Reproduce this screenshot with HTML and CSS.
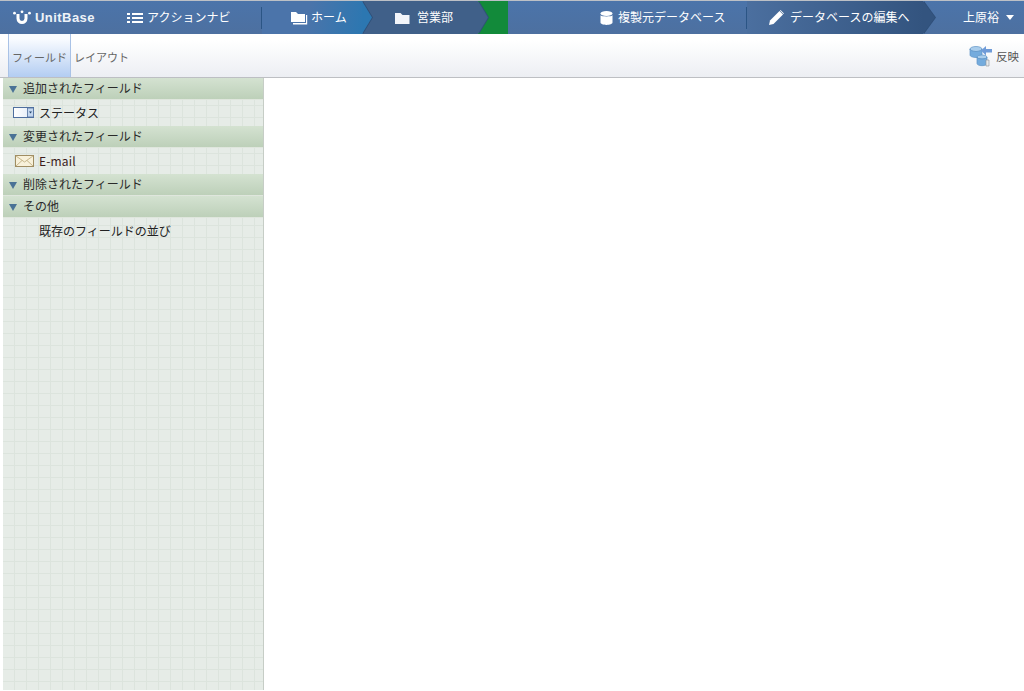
FILE: index.html
```html
<!DOCTYPE html>
<html lang="ja">
<head>
<meta charset="utf-8">
<title>UnitBase</title>
<link rel="stylesheet" href="styles.css">
</head>
<body>
<header class="topbar">
  <div class="logo">
    <svg class="logo-mark" width="18" height="15" viewBox="0 0 18 15"><path d="M3.500 4v4.500a5.500 5.500 0 0 0 11 0V4h-3v4.500a2.500 2.500 0 0 1-5 0V4z" fill="#fff"/><circle cx="1.500" cy="3.200" r="1.400" fill="#fff"/><circle cx="9" cy="1.800" r="1.400" fill="#fff"/><circle cx="16.500" cy="3.200" r="1.400" fill="#fff"/></svg>
    <span class="logo-text">UnitBase</span>
  </div>
  <div class="nav-item action">
    <svg width="16" height="12" viewBox="0 0 16 12"><path d="M0 1h3v2H0zM5 1h11v2H5zM0 5h3v2H0zM5 5h11v2H5zM0 9h3v2H0zM5 9h11v2H5z" fill="#fff"/></svg>
    <span>アクションナビ</span>
  </div>
  <div class="sep sep-left"></div>
  <div class="crumb home">
    <svg width="17" height="14" viewBox="0 0 17 14"><path d="M0 1h5l2 2h7v8H0z" fill="#fff"/><path d="M15 4h1.200v9.400H2V12h13z" fill="#fff"/></svg>
    <span>ホーム</span>
  </div>
  <div class="crumb sales">
    <svg width="15" height="12" viewBox="0 0 15 12"><path d="M0 1h5.500l2 2H14.500v9H0z" fill="#f2f5fa"/></svg>
    <span>営業部</span>
  </div>
  <div class="green"></div>
  <div class="nav-item source">
    <svg width="13" height="14" viewBox="0 0 13 14"><ellipse cx="6.500" cy="2.600" rx="6" ry="2.500" fill="#fff"/><path d="M.5 4.200c1 1.600 11 1.600 12 0v7.300c0 1.300-2.700 2.400-6 2.400s-6-1.100-6-2.400z" fill="#fff"/></svg>
    <span>複製元データベース</span>
  </div>
  <div class="sep sep-right"></div>
  <div class="crumb edit">
    <svg width="15" height="15" viewBox="0 0 15 15"><path d="M0 15l1-4.500L10.500 1l3.500 3.500L4.500 14z" fill="#fff"/><path d="M11.500 0l3.500 3.500-.6.600-3.500-3.500z" fill="#fff"/></svg>
    <span>データベースの編集へ</span>
  </div>
  <div class="user">
    <span>上原裕</span>
    <i class="caret"></i>
  </div>
</header>

<nav class="toolbar">
  <div class="tab active">フィールド</div>
  <div class="tab">レイアウト</div>
  <div class="apply">
    <svg width="24" height="22" viewBox="0 0 24 22">
      <ellipse cx="7" cy="4" rx="6" ry="2.500" fill="#a9cdec" stroke="#5f94c6" stroke-width=".7"/>
      <path d="M1 4v6c0 1.400 2.700 2.500 6 2.500s6-1.100 6-2.500V4c0 1.400-2.700 2.500-6 2.500S1 5.400 1 4z" fill="#74abdd" stroke="#5f94c6" stroke-width=".7"/>
      <path d="M12 5.500l5-4.500v3h6v3.500h-6v3z" fill="#6f9bd8"/>
      <ellipse cx="13" cy="12" rx="5" ry="2" fill="#a9cdec" stroke="#5f94c6" stroke-width=".7"/>
      <path d="M8 12v6.500c0 1.200 2.200 2.200 5 2.200s5-1 5-2.200V12c0 1.200-2.200 2-5 2s-5-.8-5-2z" fill="#74abdd" stroke="#5f94c6" stroke-width=".7"/>
      <path d="M17 15h3v6h-3z" fill="#e6e9eb" stroke="#8b9298" stroke-width=".6"/>
    </svg>
    <span>反映</span>
  </div>
</nav>

<div class="workspace">
  <aside class="sidebar">
    <div class="group"><i class="tri"></i>追加されたフィールド</div>
    <div class="row">
      <svg class="row-icon" width="22" height="11" viewBox="0 0 22 11"><defs><linearGradient id="box" x1="0" x2="1" y1="0" y2="0"><stop offset="0" stop-color="#fff"/><stop offset="1" stop-color="#dfe9f6"/></linearGradient></defs><rect x=".5" y=".5" width="20" height="10" fill="url(#box)" stroke="#4f6f9f"/><rect x="14.500" y="1" width="6" height="9" fill="#c3d6ee" stroke="#4f6f9f" stroke-width=".8"/><path d="M16 4.500h3L17.500 6.500z" fill="#24466f"/></svg>
      <span>ステータス</span>
    </div>
    <div class="group"><i class="tri"></i>変更されたフィールド</div>
    <div class="row">
      <svg class="row-icon mail" width="19" height="12" viewBox="0 0 19 12"><rect x=".5" y=".5" width="18" height="11" fill="#f8f1da" stroke="#a08d62"/><path d="M1 1l8.500 6L18 1M1 11l6-5.500M18 11l-6-5.500" fill="none" stroke="#c7b78c"/></svg>
      <span class="email">E-mail</span>
    </div>
    <div class="group"><i class="tri"></i>削除されたフィールド</div>
    <div class="group"><i class="tri"></i>その他</div>
    <div class="row"><span class="indent">既存のフィールドの並び</span></div>
  </aside>
  <main class="content"></main>
</div>
</body>
</html>
```
FILE: styles.css
```css
* { box-sizing: border-box; }
html, body { margin: 0; height: 100%; }
body {
  display: flex;
  flex-direction: column;
  height: 691px;
  overflow: hidden;
  background: #fff;
  font-family: "Noto Sans CJK JP", "Liberation Sans", sans-serif;
  font-size: 12px;
  color: #333;
}
.topbar {
  display: flex;
  align-items: center;
  height: 34px;
  flex: none;
  border-top: 1px solid #bcc0c6;
  background: linear-gradient(#4b74aa, #4d70a0);
  color: #fff;
}
.topbar svg { flex: none; }
.topbar span { padding-bottom: 2px; }
.logo {
  display: flex;
  align-items: center;
  gap: 4px;
  width: 127px;
  padding-left: 13px;
}
.topbar .logo-text {
  padding-bottom: 0;
  font-family: "Liberation Sans", sans-serif;
  font-size: 13px;
  font-weight: 700;
  letter-spacing: .45px;
  color: #eef2f8;
}
.nav-item { display: flex; align-items: center; }
.action { gap: 4px; width: 134px; }
.sep { width: 1px; height: 22px; background: #2b5585; flex: none; }
.crumb {
  position: relative;
  display: flex;
  align-items: center;
  height: 33px;
  flex: none;
}
.crumb::before, .crumb::after {
  content: "";
  position: absolute;
  top: 0;
  width: 10px;
  height: 33px;
  clip-path: polygon(0 0, 100% 50%, 0 100%);
}
.crumb::before { left: 100%; margin-left: 1px; background: #2f4f78; z-index: 1; }
.crumb::after { left: 100%; z-index: 2; }
.home {
  width: 100px;
  padding-left: 29px;
  gap: 3px;
  background: linear-gradient(100deg, #4b74aa 45%, #2c77b1 100%);
}
.home::after { background: #2c77b1; }
.sales {
  width: 116px;
  padding-left: 33px;
  gap: 7px;
  background: #406089;
}
.sales::after { background: #406089; }
.green {
  width: 30px;
  height: 33px;
  flex: none;
  background: #128a3a;
}
.source { gap: 5px; margin-left: 92px; width: 146px; }
.edit {
  width: 176px;
  padding-left: 22px;
  gap: 6px;
  background: linear-gradient(90deg, #4b6f9f 0%, #33547f 100%);
}
.edit::before, .edit::after { width: 12px; }
.edit::after { background: #33547f; }
.user {
  display: flex;
  align-items: center;
  gap: 7px;
  margin-left: 40px;
}
.caret {
  width: 0;
  height: 0;
  border: 4px solid transparent;
  border-top: 5px solid #fff;
  border-bottom: 0;
}
.toolbar {
  display: flex;
  align-items: stretch;
  height: 44px;
  flex: none;
  padding-left: 8px;
  border-bottom: 1px solid #bdbfc3;
  background: linear-gradient(#fff 15%, #eceef3 100%);
  font-size: 11px;
  color: #666;
}
.tab {
  display: flex;
  align-items: center;
  justify-content: center;
  width: 63px;
  padding-top: 2px;
}
.tab.active {
  border-left: 1px solid #a9c2e6;
  border-right: 1px solid #a9c2e6;
  background: linear-gradient(#fafcff 10%, #b3cdf2 100%);
}
.tab + .tab { margin-left: 1px; justify-content: flex-start; padding-left: 2px; }
.apply {
  display: flex;
  align-items: center;
  gap: 3px;
  margin-left: auto;
  padding-right: 5px;
  color: #555;
  font-size: 11.500px;
}
.workspace {
  display: flex;
  flex: 1;
  min-height: 0;
  padding-left: 3px;
  padding-bottom: 1px;
}
.sidebar {
  width: 261px;
  flex: none;
  border-right: 1px solid #c6cdc6;
  background-color: #e6ece7;
  background-image:
    linear-gradient(90deg, transparent 11px, #dce4dd 11px),
    linear-gradient(#dce4dd 1px, transparent 1px);
  background-size: 12px 12px;
  background-position: 0 3px;
  color: #222;
}
.group {
  display: flex;
  align-items: center;
  height: 22px;
  padding: 0 0 2px 6px;
  gap: 6px;
  border-bottom: 1px solid #dfe6dd;
  background: linear-gradient(#d4e2d1, #bdd0b9);
  color: #2a2a2a;
}
.tri {
  width: 0;
  height: 0;
  margin-top: 4px;
  border-left: 4px solid transparent;
  border-right: 4px solid transparent;
  border-top: 7px solid #4a7296;
}
.row {
  display: flex;
  align-items: center;
  height: 26px;
  padding: 0 0 2px 36px;
  position: relative;
}
.row-icon {
  position: absolute;
  left: 10px;
  top: 7px;
}
.row-icon.mail { left: 12px; }
.email { color: #3a1a1a; letter-spacing: .15px; }
```
